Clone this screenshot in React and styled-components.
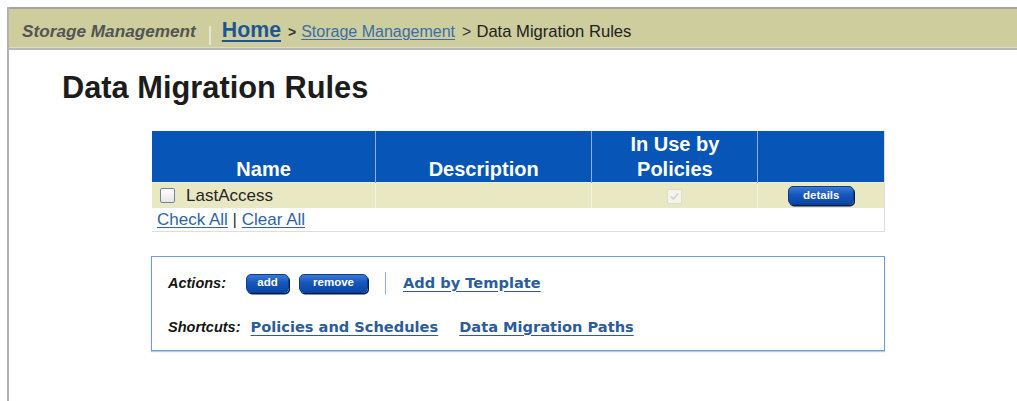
import React from "react";
import styled, { createGlobalStyle } from "styled-components";

const GlobalStyle = createGlobalStyle`
  html, body {
    margin: 0;
    padding: 0;
    background: #ffffff;
  }
  body {
    font-family: "Liberation Sans", Arial, sans-serif;
    color: #1a1a1a;
  }
`;

const Frame = styled.div`
  margin: 7px 0 0 7px;
  min-height: calc(100vh - 7px);
  border-left: 2px solid #b4b4b4;
  box-sizing: border-box;
`;

const CrumbBar = styled.div`
  display: flex;
  align-items: baseline;
  height: 30px;
  padding: 9px 0 0 13px;
  background: #cdcd9d;
  border-top: 2px solid #a4a4a4;
  border-bottom: 2px solid #b8b8b8;
  box-shadow: inset 0 -1px 0 #dcdcc4;
  white-space: nowrap;
`;

const AppName = styled.span`
  font-weight: bold;
  font-style: italic;
  font-size: 17.2px;
  color: #545454;
`;

const CrumbDivider = styled.span`
  display: inline-block;
  width: 2px;
  height: 19px;
  margin: 0 11px 0 13px;
  background: #e6e6d4;
  align-self: center;
  transform: translateY(2px);
`;

const HomeLink = styled.a`
  font-weight: bold;
  font-size: 21.3px;
  color: #1f5597;
  text-decoration: underline;
  text-underline-offset: 3px;
`;

const CrumbArrow = styled.span`
  font-size: ${(p) => (p.$bold ? "14px" : "16px")};
  font-weight: ${(p) => (p.$bold ? "bold" : "normal")};
  color: #333333;
  margin: 0 5px 0 7px;
`;

const CrumbLink = styled.a`
  font-size: 16px;
  color: #3a6ea8;
  text-decoration: underline;
  text-underline-offset: 2px;
`;

const CrumbCurrent = styled.span`
  font-size: 16.6px;
  color: #222222;
`;

const Content = styled.div`
  padding: 23px 0 40px 0;
`;

const Title = styled.h1`
  margin: 0 0 28px 53px;
  font-size: 30.8px;
  line-height: 30px;
  font-weight: bold;
  color: #1c1c1c;
`;

const Body = styled.div`
  margin-left: 142px;
  width: 734px;
`;

const RuleTable = styled.table`
  width: 733px;
  margin-left: 1px;
  border-collapse: collapse;
  border-right: 1px solid #dedede;
  border-bottom: 1px solid #dedede;
`;

const HeadCell = styled.th`
  width: ${(p) => p.$w}px;
  height: 51px;
  padding: 0;
  background: #0755b6;
  color: #ffffff;
  font-size: 20px;
  line-height: 25px;
  font-weight: bold;
  text-align: center;
  vertical-align: bottom;
  border-left: 1px solid #8fb0dc;
  &:first-child {
    border-left: none;
  }
`;

const DataRow = styled.tr`
  background: #e8e8c3;
`;

const DataCell = styled.td`
  height: 25px;
  padding: 0 0 0 ${(p) => (p.$pad ? 8 : 0)}px;
  text-align: ${(p) => p.$align || "left"};
  vertical-align: middle;
  border-left: 1px solid #f3f3e2;
  border-top: 1px solid #f0f0e0;
  &:first-child {
    border-left: none;
  }
`;

const NameWrap = styled.div`
  display: flex;
  align-items: center;
  gap: 11px;
  font-size: 17px;
  color: #262626;
`;

const Box = styled.span`
  display: inline-block;
  box-sizing: border-box;
  width: 15px;
  height: 15px;
  border-radius: 2px;
  border: 1px solid ${(p) => (p.$disabled ? "#dcdcd0" : "#72839c")};
  background: ${(p) =>
    p.$disabled
      ? "#f4f4ea"
      : "linear-gradient(#ffffff, #e6e6e6)"};
  position: relative;
  vertical-align: middle;
`;

const Tick = styled.svg`
  position: absolute;
  left: 1px;
  top: 1px;
`;

const PillButton = styled.button`
  box-sizing: border-box;
  width: ${(p) => p.$w}px;
  height: ${(p) => p.$h || 19}px;
  padding: 0;
  border: 1px solid #0b3d8c;
  border-radius: 5px;
  background: linear-gradient(#3b79d6 0%, #1657bb 45%, #0a46a6 100%);
  box-shadow: 1px 1.5px 0 #041f57;
  color: #ffffff;
  font-family: "Liberation Sans", Arial, sans-serif;
  font-weight: bold;
  font-size: 11.5px;
  line-height: 1;
  vertical-align: middle;
  cursor: pointer;
`;

const FootCell = styled.td`
  height: 23px;
  padding: 0 0 0 5px;
  background: #ffffff;
  font-size: 17px;
  color: #333333;
  vertical-align: middle;
`;

const PlainLink = styled.a`
  color: #2f64a4;
  text-decoration: underline;
  text-underline-offset: 2px;
`;

const ActionPanel = styled.div`
  margin-top: 24px;
  box-sizing: border-box;
  width: 734px;
  padding: 15px 16px 12px 16px;
  border: 1px solid #6f9bd6;
  box-shadow: 0 1px 1px #b7cbe6;
  display: flex;
  flex-direction: column;
  gap: 22px;
`;

const PanelRow = styled.div`
  display: flex;
  align-items: center;
  height: 22px;
`;

const PanelLabel = styled.span`
  font-weight: bold;
  font-style: italic;
  font-size: 14.5px;
  color: #151515;
  margin-right: ${(p) => p.$gap}px;
`;

const PanelLink = styled.a`
  font-family: "DejaVu Sans", Verdana, sans-serif;
  font-weight: bold;
  font-size: 14.6px;
  color: #2c5c9c;
  text-decoration: underline;
  text-underline-offset: 3px;
  margin-right: ${(p) => p.$gap || 0}px;
  transform: translateY(-1px);
`;

const ButtonGap = styled.span`
  display: inline-block;
  width: ${(p) => p.$w}px;
`;

const PanelDivider = styled.span`
  display: inline-block;
  width: 1px;
  height: 22px;
  margin: 0 17px 0 17px;
  background: #93acd0;
`;

function CheckBox({ checked, disabled }) {
  return (
    <Box $disabled={disabled}>
      {checked && (
        <Tick width="11" height="11" viewBox="0 0 11 11">
          <path
            d="M2 5.5 L4.5 8 L9 2.5"
            fill="none"
            stroke="#d6d6c8"
            strokeWidth="1.8"
          />
        </Tick>
      )}
    </Box>
  );
}

const columns = [
  { key: "name", label: "Name", w: 224 },
  { key: "desc", label: "Description", w: 216 },
  { key: "use", label: ["In Use by", "Policies"], w: 166 },
  { key: "act", label: "", w: 126 },
];

const rules = [{ name: "LastAccess", description: "", inUse: true }];

export default function App() {
  return (
    <>
      <GlobalStyle />
      <Frame>
        <CrumbBar>
          <AppName>Storage Management</AppName>
          <CrumbDivider />
          <HomeLink href="#">Home</HomeLink>
          <CrumbArrow $bold>&gt;</CrumbArrow>
          <CrumbLink href="#">Storage Management </CrumbLink>
          <CrumbArrow>&gt;</CrumbArrow>
          <CrumbCurrent>Data Migration Rules</CrumbCurrent>
        </CrumbBar>

        <Content>
          <Title>Data Migration Rules</Title>
          <Body>
            <RuleTable>
              <thead>
                <tr>
                  {columns.map((c) => (
                    <HeadCell key={c.key} $w={c.w}>
                      {Array.isArray(c.label)
                        ? c.label.map((l, i) => (
                            <React.Fragment key={l}>
                              {i > 0 && <br />}
                              {l}
                            </React.Fragment>
                          ))
                        : c.label}
                    </HeadCell>
                  ))}
                </tr>
              </thead>
              <tbody>
                {rules.map((r) => (
                  <DataRow key={r.name}>
                    <DataCell $pad>
                      <NameWrap>
                        <CheckBox />
                        <span>{r.name}</span>
                      </NameWrap>
                    </DataCell>
                    <DataCell>{r.description}</DataCell>
                    <DataCell $align="center">
                      <CheckBox checked={r.inUse} disabled />
                    </DataCell>
                    <DataCell $align="center">
                      <PillButton $w={66} $h={19}>
                        details
                      </PillButton>
                    </DataCell>
                  </DataRow>
                ))}
                <tr>
                  <FootCell colSpan={4}>
                    <PlainLink href="#">Check All</PlainLink> |{" "}
                    <PlainLink href="#">Clear All</PlainLink>
                  </FootCell>
                </tr>
              </tbody>
            </RuleTable>

            <ActionPanel>
              <PanelRow>
                <PanelLabel $gap={20}>Actions:</PanelLabel>
                <PillButton $w={43}>add</PillButton>
                <ButtonGap $w={10} />
                <PillButton $w={69}>remove</PillButton>
                <PanelDivider />
                <PanelLink href="#">Add by Template</PanelLink>
              </PanelRow>
              <PanelRow>
                <PanelLabel $gap={10}>Shortcuts:</PanelLabel>
                <PanelLink href="#" $gap={21}>
                  Policies and Schedules
                </PanelLink>
                <PanelLink href="#">Data Migration Paths</PanelLink>
              </PanelRow>
            </ActionPanel>
          </Body>
        </Content>
      </Frame>
    </>
  );
}
